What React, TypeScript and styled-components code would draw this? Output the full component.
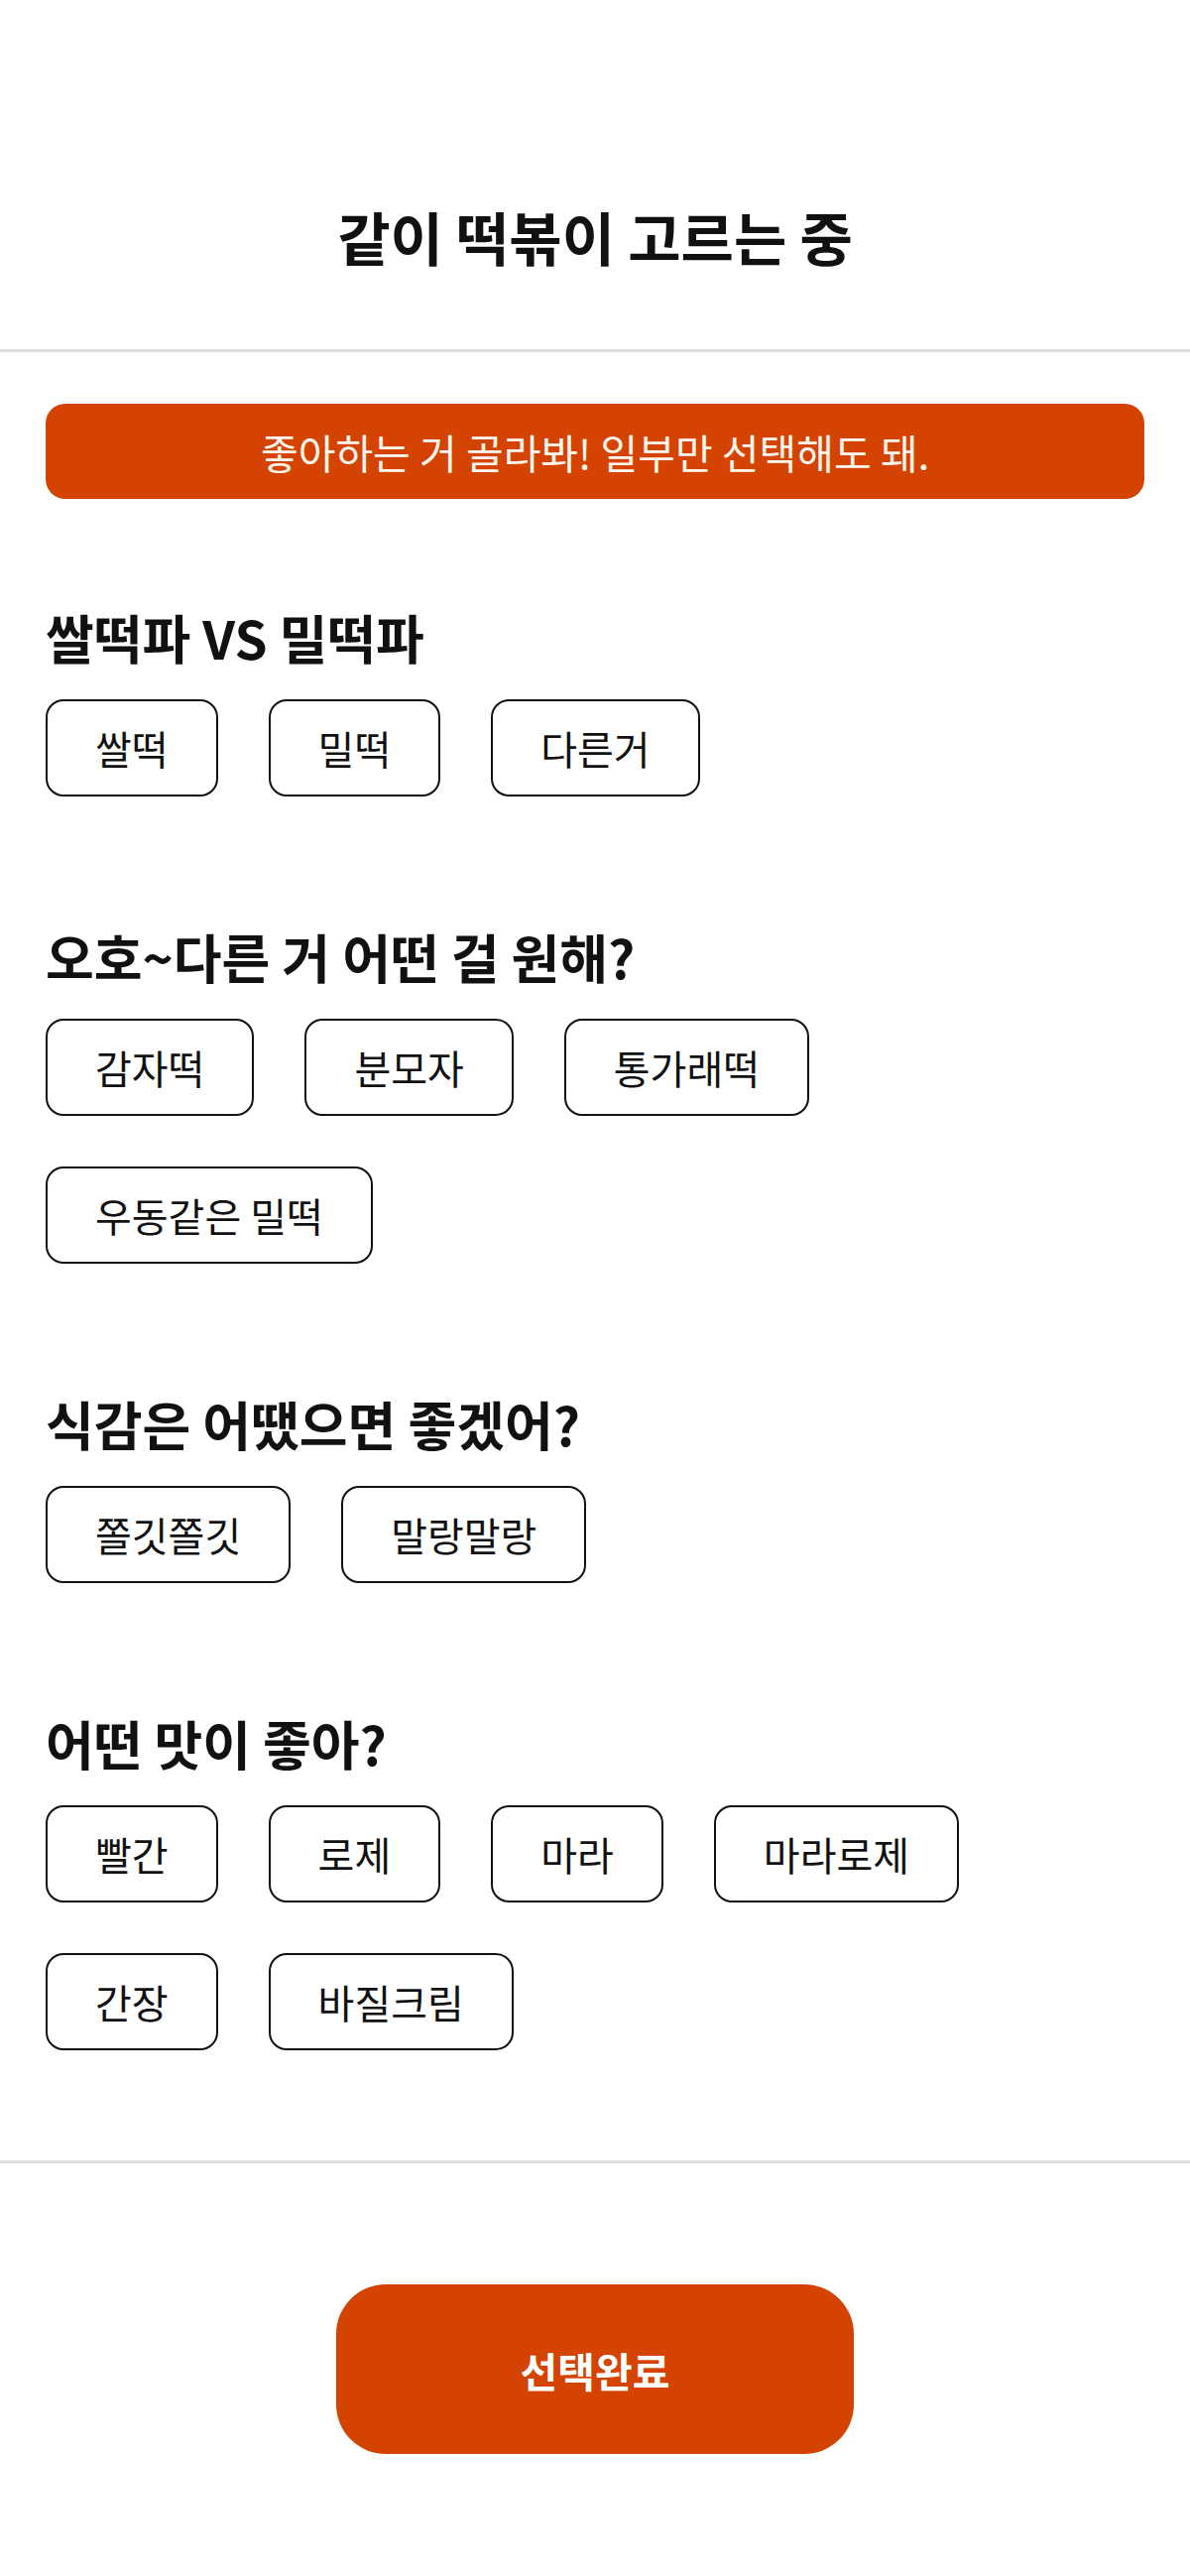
import React, {useState} from 'react';
import styled, {createGlobalStyle} from 'styled-components';

const GlobalStyle = createGlobalStyle`
  * { box-sizing: border-box; }
  body {
    margin: 0;
    background: #fff;
    font-family: "Noto Sans CJK KR", "Noto Sans", sans-serif;
    color: #111;
  }
`;

const Page = styled.div`
  width: 1200px;
  min-height: 2597px;
  display: flex;
  flex-direction: column;
`;

const Header = styled.header`
  height: 355px;
  display: flex;
  align-items: flex-end;
  justify-content: center;
  padding-bottom: 76px;
  border-bottom: 3px solid #dedede;
`;

const Title = styled.h1`
  margin: 0;
  font-size: 58px;
  line-height: 76px;
  font-weight: 700;
  color: #111;
`;

const Main = styled.main`
  padding: 52px 46px 111px;
  border-bottom: 3px solid #dedede;
`;

const Notice = styled.div`
  height: 96px;
  border-radius: 20px;
  background: #d44400;
  color: #fff6f0;
  font-size: 41px;
  display: flex;
  align-items: center;
  justify-content: center;
  margin-bottom: 109px;
`;

const Sections = styled.div`
  display: flex;
  flex-direction: column;
  gap: 131px;
`;

const Section = styled.section`
  display: flex;
  flex-direction: column;
  gap: 33px;
`;

const Question = styled.h2`
  margin: 0;
  font-size: 53px;
  line-height: 60px;
  font-weight: 700;
  color: #111;
`;

const Options = styled.div`
  display: flex;
  flex-wrap: wrap;
  gap: 51px;
`;

const Chip = styled.button<{$on?: boolean}>`
  height: 98px;
  padding: 0 48px;
  border: 2px solid #111;
  border-radius: 18px;
  background: ${p => (p.$on ? '#d44400' : '#fff')};
  color: ${p => (p.$on ? '#fff' : '#111')};
  font-family: inherit;
  font-size: 40px;
  line-height: 1;
  white-space: nowrap;
  cursor: pointer;
`;

const Footer = styled.footer`
  display: flex;
  justify-content: center;
  padding: 122px 0 126px;
`;

const Submit = styled.button`
  width: 522px;
  height: 171px;
  border: none;
  border-radius: 50px;
  background: #d44400;
  color: #fff;
  font-family: inherit;
  font-size: 41px;
  font-weight: 700;
  cursor: pointer;
`;

const questions = [
  {title: '쌀떡파 VS 밀떡파', options: ['쌀떡', '밀떡', '다른거']},
  {title: '오호~다른 거 어떤 걸 원해?', options: ['감자떡', '분모자', '통가래떡', '우동같은 밀떡']},
  {title: '식감은 어땠으면 좋겠어?', options: ['쫄깃쫄깃', '말랑말랑']},
  {title: '어떤 맛이 좋아?', options: ['빨간', '로제', '마라', '마라로제', '간장', '바질크림']},
];

function App() {
  const [picked, setPicked] = useState<string[]>([]);
  const toggle = (key: string) =>
    setPicked(list => (list.includes(key) ? list.filter(k => k !== key) : [...list, key]));

  return (
    <Page>
      <GlobalStyle/>
      <Header>
        <Title>같이 떡볶이 고르는 중</Title>
      </Header>
      <Main>
        <Notice>좋아하는 거 골라봐! 일부만 선택해도 돼.</Notice>
        <Sections>
          {questions.map((q, i) => (
            <Section key={q.title}>
              <Question>{q.title}</Question>
              <Options>
                {q.options.map(o => {
                  const key = i + o;
                  return (
                    <Chip key={key} $on={picked.includes(key)} onClick={() => toggle(key)}>
                      {o}
                    </Chip>
                  );
                })}
              </Options>
            </Section>
          ))}
        </Sections>
      </Main>
      <Footer>
        <Submit>선택완료</Submit>
      </Footer>
    </Page>
  );
}

export default App;
